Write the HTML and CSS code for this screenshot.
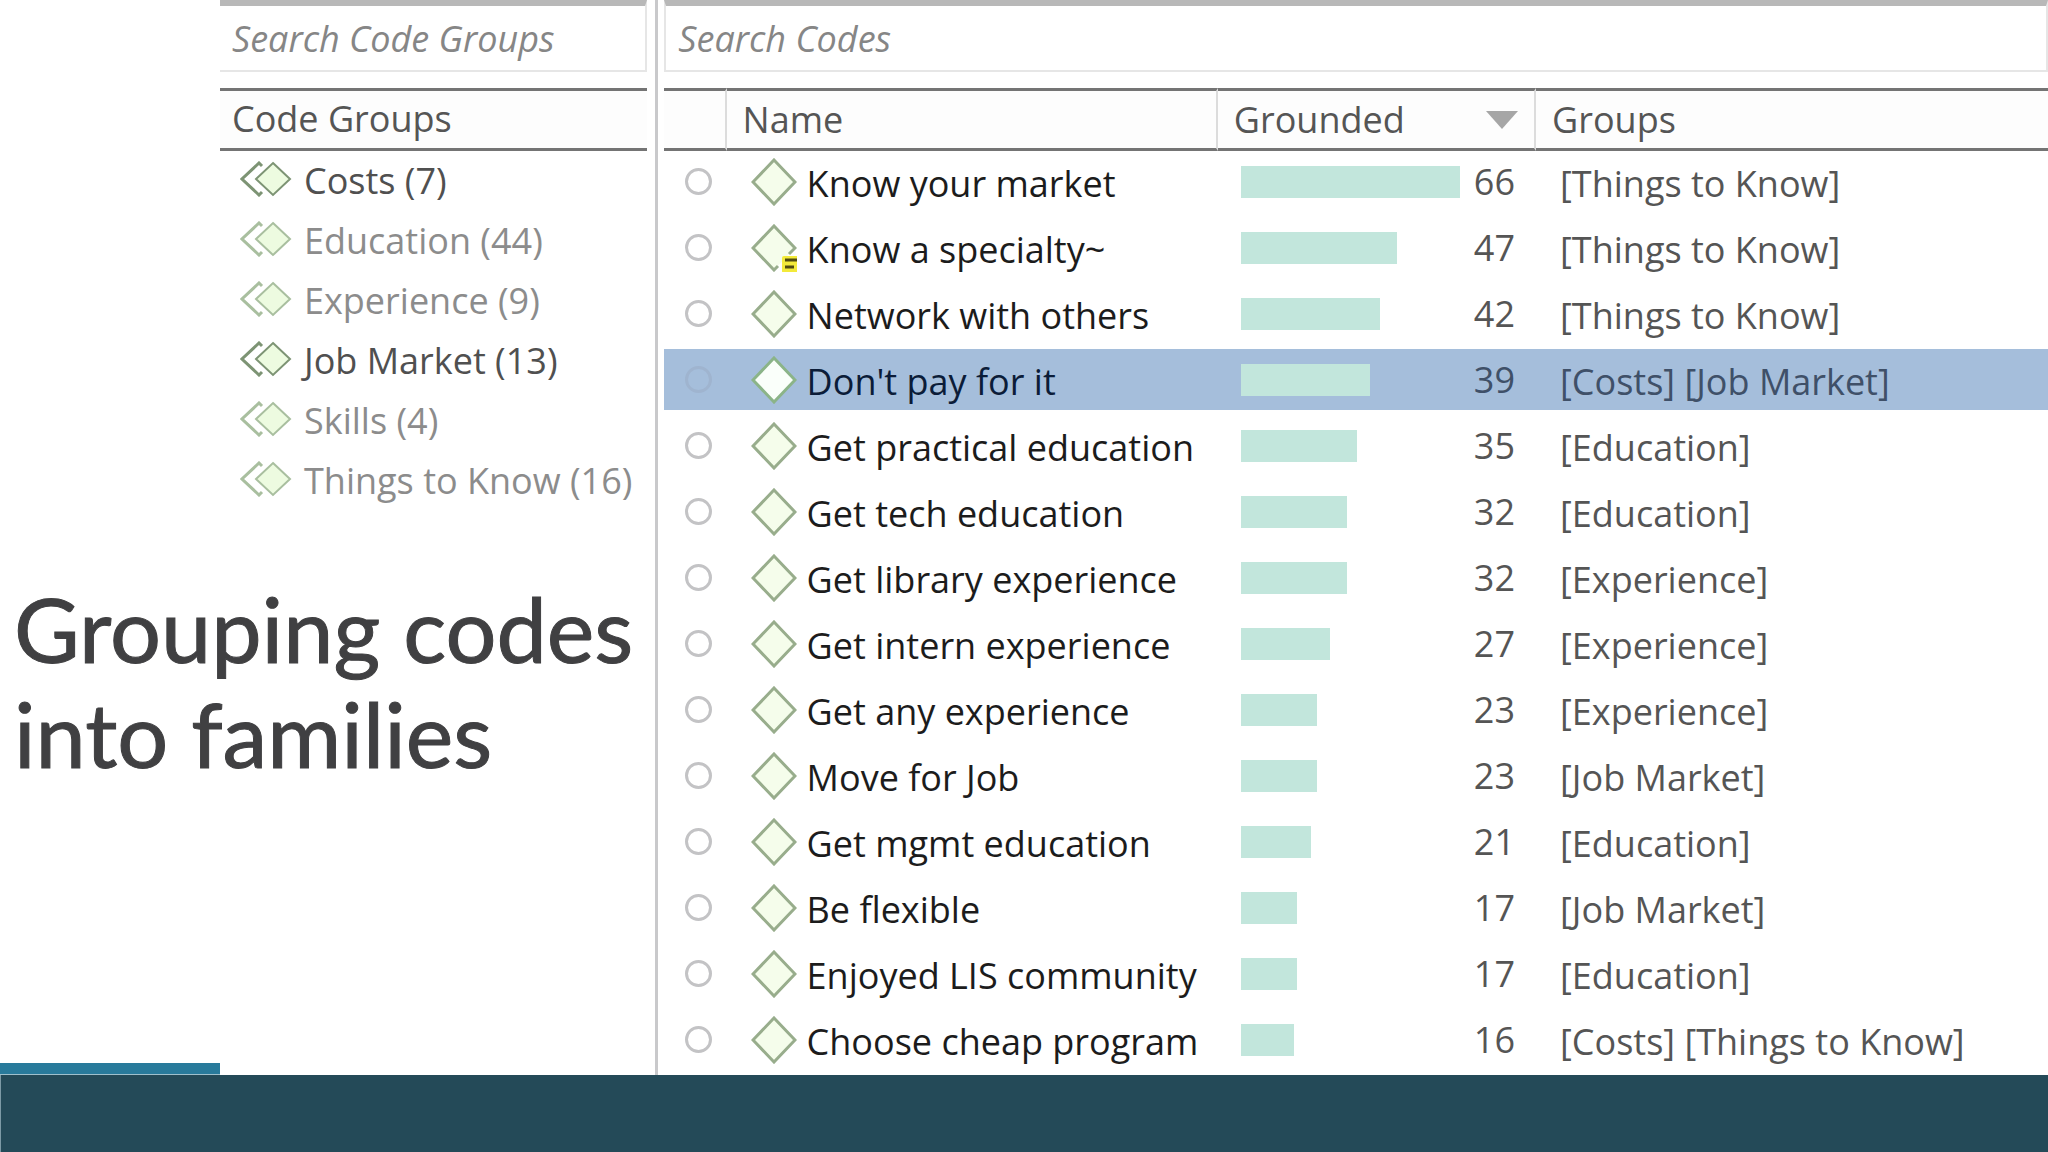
FILE: index.html
```html
<!DOCTYPE html>
<html lang="en">
<head>
    <meta charset="UTF-8">
    <meta name="viewport" content="width=device-width, initial-scale=1.0">
    <title>Grouping codes into families</title>
    <link rel="stylesheet" href="styles.css">
</head>
<body>
    <!-- shared icons -->
    <svg class="icon-defs" aria-hidden="true">
        <symbol id="icon-code" viewBox="0 0 46 48">
            <path d="M23 2 L44 24 L23 46 L2 24 Z"/>
        </symbol>
        <symbol id="icon-memo" viewBox="0 0 46 48">
            <path d="M38 30 L44 24 L23 2 L2 24 L23 46 L27 42"/>
            <rect class="note" x="31" y="32" width="18" height="17" rx="2"/>
            <path class="note-lines" d="M34 36 H46 M34 43 H43"/>
        </symbol>
        <symbol id="icon-group" viewBox="0 0 52 36">
            <path class="back" d="M22 5 L19 2 L2 18 L19 34 L22 31"/>
            <path d="M33 2 L50 18 L33 34 L16 18 Z"/>
        </symbol>
    </svg>

    <main class="slide">
        <div class="left">
            <section class="groups-panel">
                <input class="search" type="text" placeholder="Search Code Groups" aria-label="Search Code Groups">
                <h2>Code Groups</h2>
                <ul>
                    <li class="used"><svg><use href="#icon-group"/></svg>Costs (7)</li>
                    <li><svg><use href="#icon-group"/></svg>Education (44)</li>
                    <li><svg><use href="#icon-group"/></svg>Experience (9)</li>
                    <li class="used"><svg><use href="#icon-group"/></svg>Job Market (13)</li>
                    <li><svg><use href="#icon-group"/></svg>Skills (4)</li>
                    <li><svg><use href="#icon-group"/></svg>Things to Know (16)</li>
                </ul>
            </section>
            <h1>Grouping codes<br>into families</h1>
        </div>

        <section class="codes-panel">
            <input class="search" type="text" placeholder="Search Codes" aria-label="Search Codes">
            <table>
                <colgroup>
                    <col class="col-mark"><col class="col-name"><col class="col-grounded"><col>
                </colgroup>
                <thead>
                    <tr>
                        <th></th>
                        <th>Name</th>
                        <th><div class="sorted">Grounded <span class="arrow"></span></div></th>
                        <th>Groups</th>
                    </tr>
                </thead>
                <tbody id="codes"></tbody>
            </table>
        </section>
    </main>

    <footer><div class="accent"></div></footer>

    <script>
        const codes = [
            ['Know your market', 66, '[Things to Know]'],
            ['Know a specialty~', 47, '[Things to Know]'],
            ['Network with others', 42, '[Things to Know]'],
            ["Don't pay for it", 39, '[Costs] [Job Market]'],
            ['Get practical education', 35, '[Education]'],
            ['Get tech education', 32, '[Education]'],
            ['Get library experience', 32, '[Experience]'],
            ['Get intern experience', 27, '[Experience]'],
            ['Get any experience', 23, '[Experience]'],
            ['Move for Job', 23, '[Job Market]'],
            ['Get mgmt education', 21, '[Education]'],
            ['Be flexible', 17, '[Job Market]'],
            ['Enjoyed LIS community', 17, '[Education]'],
            ['Choose cheap program', 16, '[Costs] [Things to Know]']
        ];
        const max = codes[0][1];

        // a trailing ~ means the code has a memo
        document.getElementById('codes').innerHTML = codes.map(([name, count, groups], i) => `
            <tr class="${i === 3 ? 'selected' : ''}">
                <td><input type="radio" name="code" aria-label="${name}"></td>
                <td><div class="name"><svg><use href="#${name.endsWith('~') ? 'icon-memo' : 'icon-code'}"/></svg><span>${name}</span></div></td>
                <td><div class="grounded">
                    <div class="track"><div class="bar" style="width: ${count / max * 100}%"></div></div>
                    <span>${count}</span>
                </div></td>
                <td>${groups}</td>
            </tr>`).join('');
    </script>
</body>
</html>
```
FILE: styles.css
```css
* {
    box-sizing: border-box;
}

body {
    margin: 0;
    min-height: 100vh;
    display: flex;
    flex-direction: column;
    background: #fff;
    color: #555;
    font-family: "Open Sans", "Noto Sans", sans-serif;
    font-size: 36px;
    line-height: 48px;
}

.icon-defs {
    position: absolute;
    width: 0;
    height: 0;
}

.slide {
    flex: 1;
    display: grid;
    grid-template-columns: 32% 1fr;
}

.groups-panel {
    margin: 0 8px 0 220px;
}

.search {
    display: block;
    width: 100%;
    height: 72px;
    margin: 0 0 16px;
    padding: 0 12px;
    border: 2px solid #e6e6e6;
    border-top: 6px solid #b8b8b8;
    background: #fff;
    font: italic 36px "Open Sans", "Noto Sans", sans-serif;
}

.groups-panel .search {
    border-left: none;
}

.search::placeholder {
    color: #868686;
    opacity: 1;
}

h2 {
    height: 63px;
    margin: 0;
    padding: 4px 12px;
    border-top: 3px solid #747474;
    border-bottom: 3px solid #747474;
    background: #fdfdfd;
    font-size: 36px;
    font-weight: 400;
}

ul {
    margin: 0;
    padding: 0;
    list-style: none;
}

li {
    display: flex;
    align-items: center;
    gap: 12px;
    height: 60px;
    padding-left: 20px;
    color: #8c8c8c;
    white-space: nowrap;
}

li svg {
    width: 52px;
    height: 36px;
    margin-bottom: 4px;
    fill: #edfbe0;
    stroke: #a9bf9f;
    stroke-width: 2;
}

.back {
    fill: none;
    stroke-width: 3;
}

.used {
    color: #505050;
}

.used svg {
    stroke: #7d9474;
}

h1 {
    margin: 65px 0 0;
    padding-left: 14px;
    color: #404042;
    font-family: Lato, sans-serif;
    font-size: 90px;
    font-weight: 400;
    line-height: 105px;
    white-space: nowrap;
    -webkit-text-stroke: 1px #404042;
}

.codes-panel {
    padding-left: 6px;
    border-left: 3px solid #c9c9cb;
}

table {
    width: 100%;
    table-layout: fixed;
    border-collapse: separate;
    border-spacing: 0;
    white-space: nowrap;
}

.col-mark {
    width: 4.5%;
}

.col-name {
    width: 35.5%;
}

.col-grounded {
    width: 23%;
}

th {
    height: 63px;
    padding: 0 16px;
    border-top: 3px solid #747474;
    border-bottom: 3px solid #747474;
    border-right: 2px solid #dcdcdc;
    background: #fdfdfd;
    font-weight: 400;
    text-align: left;
}

th:last-child {
    border-right: none;
}

.sorted {
    display: flex;
    align-items: center;
    justify-content: space-between;
}

.arrow {
    border: 16px solid transparent;
    border-top: 18px solid #a6a6a6;
    border-bottom: none;
}

td {
    height: 66px;
    padding: 0;
    border-bottom: 5px solid #fff;
}

td:last-child {
    padding: 4px 0 0 24px;
}

.selected td {
    background: #a5bedb;
    color: #3f5068;
}

td input {
    display: block;
    width: 27px;
    height: 27px;
    margin: 0 0 0 21px;
    border: 3px solid #c3c3c5;
    border-radius: 50%;
    appearance: none;
}

.selected input {
    border-color: #9fb4cf;
}

.name {
    display: flex;
    align-items: center;
    gap: 10px;
    padding-left: 24px;
    color: #1c1c1c;
}

.name span {
    padding-top: 4px;
}

.name svg {
    width: 46px;
    height: 48px;
    overflow: visible;
    fill: #f5fdeb;
    stroke: #98ad8c;
    stroke-width: 3;
}

.selected .name {
    color: #0b1c38;
}

.selected svg {
    fill: #fafffa;
    stroke: #8bb488;
}

.note {
    fill: #f3ea3a;
    stroke: none;
}

.note-lines {
    stroke: #4f4a10;
}

.grounded {
    display: flex;
    align-items: center;
    padding: 0 21px 0 23px;
}

.track {
    flex: 1;
}

.bar {
    height: 32px;
    background: #c2e6dc;
}

.grounded span {
    width: 55px;
    text-align: right;
}

footer {
    position: relative;
    height: 77px;
    border-left: 1px solid #7d9aa5;
    background: #244a58;
}

.accent {
    position: absolute;
    left: -1px;
    bottom: 100%;
    width: 220px;
    height: 12px;
    border-bottom: 1px solid #9fc0cc;
    background: #287a9b;
}
```
